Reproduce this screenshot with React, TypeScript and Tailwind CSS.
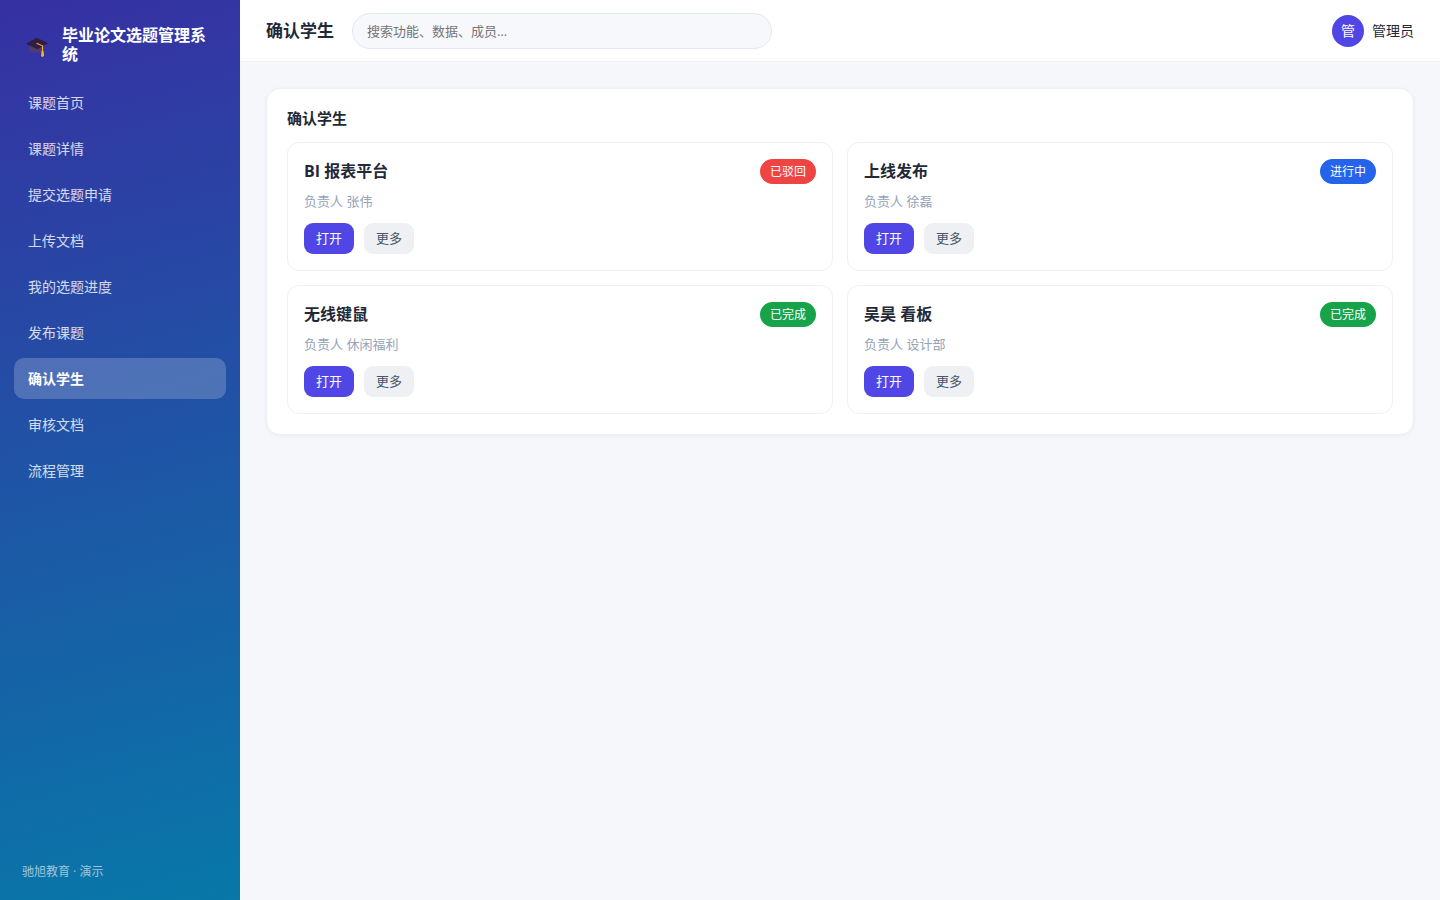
import React, { useState } from 'react';
import clsx from 'clsx';

type Status = 'rejected' | 'active' | 'done';

interface Topic {
  title: string;
  owner: string;
  status: Status;
}

const menu = [
  '课题首页',
  '课题详情',
  '提交选题申请',
  '上传文档',
  '我的选题进度',
  '发布课题',
  '确认学生',
  '审核文档',
  '流程管理',
];

const topics: Topic[] = [
  { title: 'BI 报表平台', owner: '张伟', status: 'rejected' },
  { title: '上线发布', owner: '徐磊', status: 'active' },
  { title: '无线键鼠', owner: '休闲福利', status: 'done' },
  { title: '吴昊 看板', owner: '设计部', status: 'done' },
];

const statusLabel: Record<Status, string> = {
  rejected: '已驳回',
  active: '进行中',
  done: '已完成',
};

const statusColor: Record<Status, string> = {
  rejected: 'bg-[#ef4444]',
  active: 'bg-[#2563eb]',
  done: 'bg-[#16a34a]',
};

function CapIcon() {
  return (
    <svg viewBox="0 0 30 30" className="w-[30px] h-[30px] shrink-0" aria-hidden="true">
      <path d="M7 14v5.5c0 2 3.5 3 7.5 3s7-1 7-3V14z" fill="#543a6b" />
      <path d="M14.5 7.8 26 13.3 15.5 19.2 4 13.8z" fill="#2f1d42" />
      <path d="M14.5 13.3 20.5 15.8V22" fill="none" stroke="#fbb02d" strokeWidth="1.1" />
      <path d="M19.5 21h2l.6 4.6-1.5 1.4-1.5-.8z" fill="#fbb02d" />
    </svg>
  );
}

function Sidebar() {
  const [current, setCurrent] = useState('确认学生');

  return (
    <aside className="sticky top-0 flex flex-col shrink-0 w-60 h-screen px-3.5 py-5 text-white bg-[linear-gradient(165deg,#3730a3,#0878a8)]">
      <div className="flex items-center gap-2.5 px-2 pt-1.5 pb-[18px]">
        <CapIcon />
        <div className="text-base leading-[19px] font-bold">毕业论文选题管理系统</div>
      </div>

      <nav className="flex flex-col gap-[5px]">
        {menu.map((item) => (
          <a
            key={item}
            href="#"
            onClick={() => setCurrent(item)}
            className={clsx(
              'px-3.5 py-[11px] rounded-[10px] text-sm leading-[19px]',
              item === current ? 'bg-white/20 font-bold' : 'text-white/80 hover:bg-white/10'
            )}
          >
            {item}
          </a>
        ))}
      </nav>

      <div className="mt-auto px-2 text-xs text-white/60">驰旭教育 · 演示</div>
    </aside>
  );
}

function TopicCard({ topic }: { topic: Topic }) {
  return (
    <article className="p-4 border border-[#eef0f4] rounded-xl">
      <div className="flex items-center justify-between">
        <h3 className="text-base leading-[25px] font-bold">{topic.title}</h3>
        <span className={clsx('px-2.5 rounded-full text-xs leading-[25px] text-white', statusColor[topic.status])}>
          {statusLabel[topic.status]}
        </span>
      </div>
      <p className="mt-2 text-[13px] leading-[19px] text-[#94a3b8]">负责人 {topic.owner}</p>
      <div className="flex gap-2.5 mt-3">
        <button type="button" className="px-3 py-1.5 rounded-[9px] text-[13px] leading-[19px] text-white bg-[#4f46e5]">
          打开
        </button>
        <button type="button" className="px-3 py-1.5 rounded-[9px] text-[13px] leading-[19px] text-[#475569] bg-[#eef0f4]">
          更多
        </button>
      </div>
    </article>
  );
}

export default function App() {
  return (
    <div className="flex min-h-screen bg-[#f5f7fb] text-[#1f2937] font-['Open_Sans','Noto_Sans_CJK_SC',sans-serif]">
      <Sidebar />

      <div className="flex-1 min-w-0">
        {/* Top bar */}
        <header className="flex items-center gap-[18px] h-[62px] px-[26px] bg-white border-b border-[#eef0f4]">
          <h1 className="text-[17px] leading-[25px] font-bold">确认学生</h1>
          <input
            type="search"
            aria-label="搜索"
            placeholder="搜索功能、数据、成员…"
            className="w-[420px] h-9 px-3.5 rounded-full border border-[#e5e7f0] bg-[#f7f8fc] text-[13px] placeholder:text-[#757575] outline-none"
          />
          <div className="flex items-center gap-2 ml-auto text-sm">
            <span className="flex items-center justify-center w-8 h-8 rounded-full bg-[#4f46e5] text-white">管</span>
            管理员
          </div>
        </header>

        <main className="p-[26px]">
          <section className="p-5 bg-white border border-[#eef0f4] rounded-[14px] shadow-[0_1px_4px_rgba(30,41,80,0.05)]">
            <h2 className="mb-3.5 text-[15px] leading-[19px] font-bold">确认学生</h2>
            <div className="grid grid-cols-1 md:grid-cols-2 gap-3.5">
              {topics.map((topic) => (
                <TopicCard key={topic.title} topic={topic} />
              ))}
            </div>
          </section>
        </main>
      </div>
    </div>
  );
}
